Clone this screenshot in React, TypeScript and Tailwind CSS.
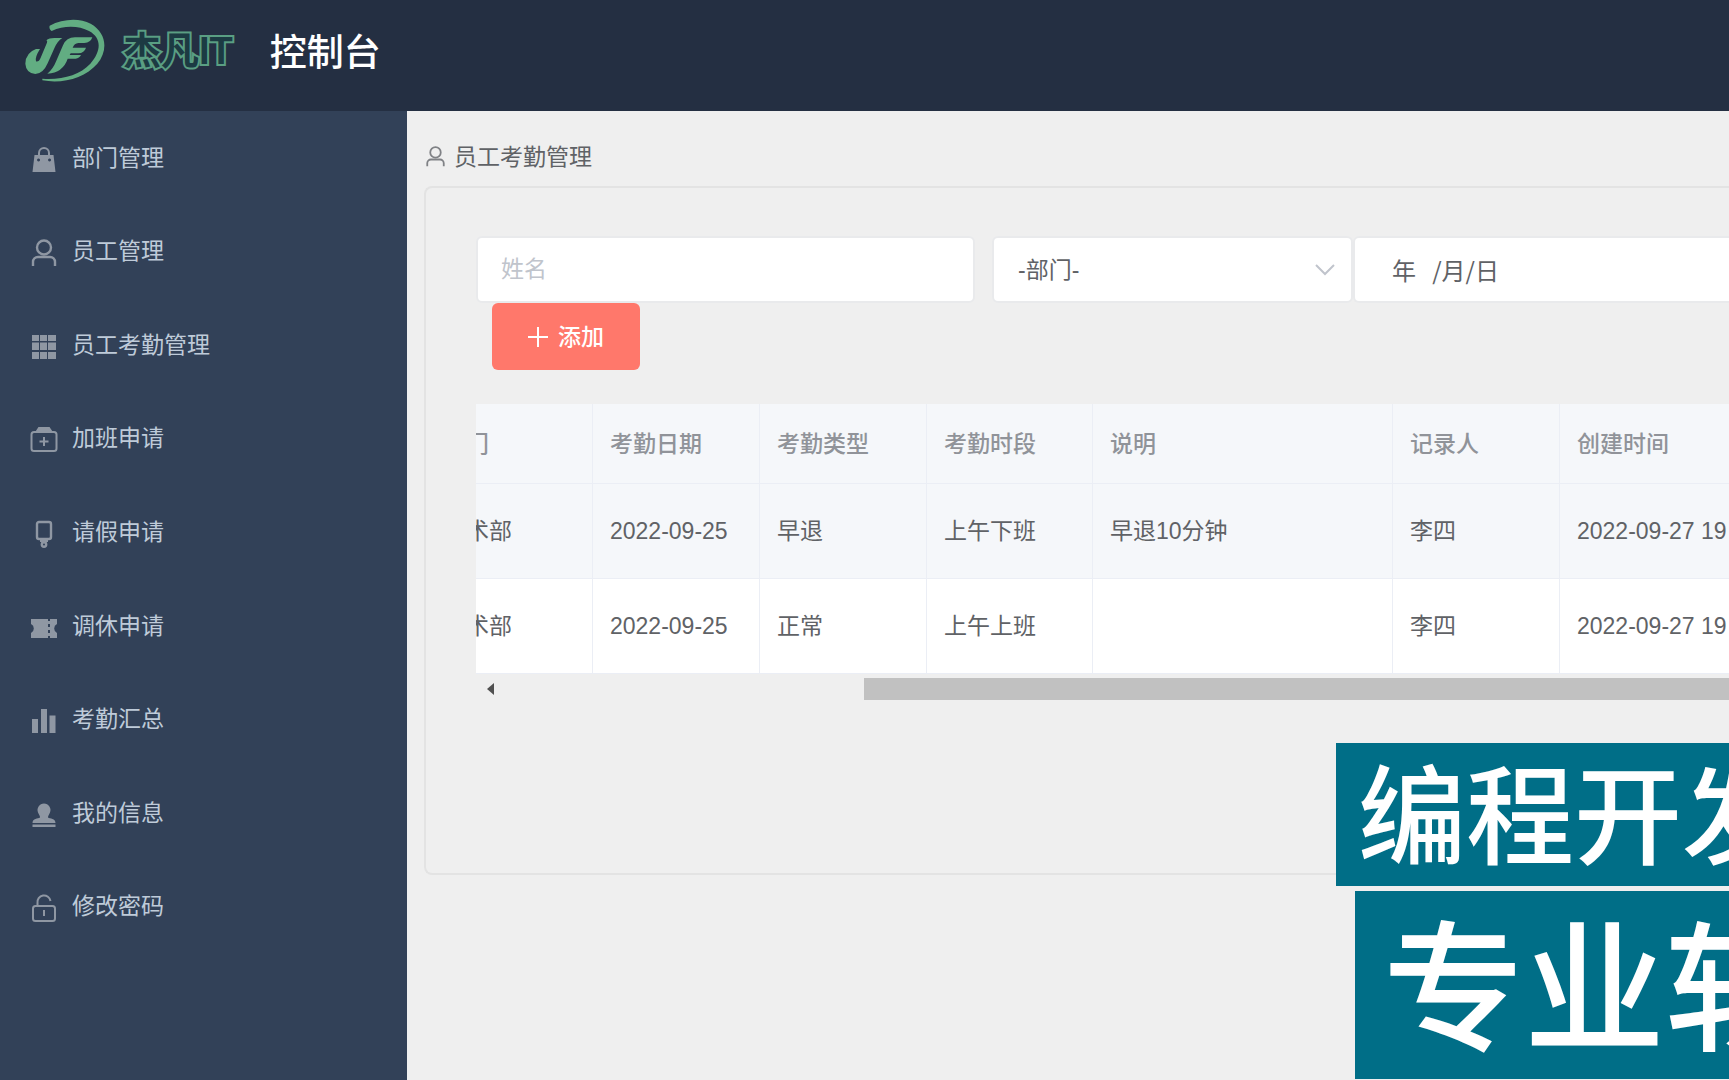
import { useLayoutEffect, useRef } from 'react'
import type { ReactNode } from 'react'
import { clsx } from 'clsx'

const UserShape = () => (
  <g fill="none" stroke="currentColor" strokeWidth="2.4">
    <circle cx="14" cy="8.5" r="7" />
    <path d="M3 27v-4a5 5 0 0 1 5-5h12a5 5 0 0 1 5 5v4" />
  </g>
)

const nav: { label: string; icon: ReactNode }[] = [
  {
    label: '部门管理',
    icon: (
      <>
        <path d="M9 10V7a5 5 0 0 1 10 0v3" fill="none" stroke="currentColor" strokeWidth="2" />
        <path
          fillRule="evenodd"
          d="M4.5 9h19l2 17h-23zM8.5 12.5a1.5 1.5 0 1 0 .1 0zM19.5 12.5a1.5 1.5 0 1 0 .1 0z"
        />
      </>
    ),
  },
  { label: '员工管理', icon: <UserShape /> },
  {
    label: '员工考勤管理',
    icon: (
      <path d="M2 2h7v6H2zM10 2h7v6h-7zM18 2h8v6h-8zM2 9.500h7V17H2zM10 9.500h7V17h-7zM18 9.500h8V17h-8zM2 19h7v7H2zM10 19h7v7h-7zM18 19h8v7h-8z" />
    ),
  },
  {
    label: '加班申请',
    icon: (
      <g fill="none" stroke="currentColor" strokeWidth="2">
        <rect x="1.5" y="6" width="25" height="19" rx="2.5" />
        <path d="M14 11v9M9.5 15.5h9" />
        <path d="M7 5l2-3h10l2 3z" fill="currentColor" />
      </g>
    ),
  },
  {
    label: '请假申请',
    icon: (
      <>
        <rect x="7" y="2" width="14" height="17" rx="2" fill="none" stroke="currentColor" strokeWidth="2.4" />
        <path d="M10 19h8v3h-8z" />
        <circle cx="14" cy="24.5" r="2.2" fill="none" stroke="currentColor" strokeWidth="2.4" />
      </>
    ),
  },
  {
    label: '调休申请',
    icon: (
      <>
        <path d="M1 5h17v19H1v-5a5 5 0 0 0 0-9zM20 5h7v5a5 5 0 0 0 0 9v5h-7z" />
        <path d="M18 7h2v3h-2zM18 13h2v3h-2zM18 19h2v3h-2z" />
      </>
    ),
  },
  { label: '考勤汇总', icon: <path d="M2 12h6v14H2zM11 2h6v24h-6zM19.5 8.500h6V26h-6z" /> },
  {
    label: '我的信息',
    icon: (
      <path d="M14 2.500a6.500 6.500 0 0 1 6 9c-1 2.500-2 3-2 5 2 1.500 7.500.5 7.500 5.500h-23c0-5 5.500-4 7.500-5.500 0-2-1-2.500-2-5a6.500 6.500 0 0 1 6-9zM2.500 23.500h23V26h-23z" />
    ),
  },
  {
    label: '修改密码',
    icon: (
      <g fill="none" stroke="currentColor" strokeWidth="2">
        <rect x="3" y="12" width="22" height="15" rx="2.500" />
        <path d="M7.500 12V9a6.500 6.500 0 0 1 13-2M14 16v6" />
      </g>
    ),
  },
]

const columns = [
  { title: '部门', width: 'w-[167px]' },
  { title: '考勤日期', width: 'w-[167px]' },
  { title: '考勤类型', width: 'w-[167px]' },
  { title: '考勤时段', width: 'w-[166px]' },
  { title: '说明', width: 'w-[300px]' },
  { title: '记录人', width: 'w-[167px]' },
  { title: '创建时间', width: 'w-[240px]' },
]

const rows = [
  ['技术部', '2022-09-25', '早退', '上午下班', '早退10分钟', '李四', '2022-09-27 19'],
  ['技术部', '2022-09-25', '正常', '上午上班', '', '李四', '2022-09-27 19'],
]

function Logo() {
  return (
    <svg viewBox="75 57 240 192" className="h-[64px] w-[80px] text-[#62ad82]" fill="currentColor" aria-hidden="true">
      <path d="M149 77C188 56 238 53 272 71c48 27 53 80 20 120-38 43-102 61-165 50v-5c60 4 112-11 144-45 34-38 34-78-4-98-30-16-74-18-112 0-6-4-8-10-6-16z" />
      <path d="M139 121q8-7 24-7h24q-15 9-24 31l-20 45q-14 32-37 32-28-3-30-31 1-33 32-44h12q-16 25-12 37 8 3 14-11l17-40q5-10 0-12z" />
      <path d="M142 221q17-14 27-39l20-46q10-24 36-24h52q-5 16-24 17h-18q-12 1-17 14h40q-5 16-23 17h-23l-3 5h34q-5 10-16 11h-24q-14 42-61 45z" />
    </svg>
  )
}

function Header() {
  return (
    <header className="flex h-[111px] shrink-0 items-start bg-[#242f42] pt-[19px] pl-[25px]">
      <Logo />
      <span className="ml-[18px] text-[38px] leading-[64px] font-bold text-[#1c3b43] [-webkit-text-stroke:4px_#5a9f83] [paint-order:stroke_fill] [stroke-linejoin:round]">
        杰凡IT
      </span>
      <h1 className="ml-[37px] text-[37px] leading-[70px] font-medium text-white">控制台</h1>
    </header>
  )
}

function Sidebar() {
  return (
    <aside className="w-[407px] shrink-0 bg-[#324158]">
      <nav className="grid h-[842px] grid-rows-9">
        {nav.map(({ label, icon }) => (
          <a key={label} href="#" className="flex items-center gap-[14px] pl-[30px] text-[#bfcbd9]">
            <svg viewBox="0 0 28 28" className="mt-1 h-7 w-7 text-[#8f97a3]" fill="currentColor" aria-hidden="true">
              {icon}
            </svg>
            {label}
          </a>
        ))}
      </nav>
    </aside>
  )
}

function Filters() {
  const field = 'h-[67px] rounded-md border-2 border-[#e9eaec] bg-white text-[#606266] outline-none'

  return (
    <form>
      <div className="flex">
        <input
          type="text"
          aria-label="姓名"
          placeholder="姓名"
          className={clsx(field, 'mr-[17px] w-[499px] shrink-0 px-[23px] placeholder:text-[#c0c4cc]')}
        />
        <div className="relative w-[361px] shrink-0">
          <select aria-label="部门" className={clsx(field, 'w-full appearance-none px-[24px]')}>
            <option>-部门-</option>
          </select>
          <svg
            viewBox="0 0 20 12"
            className="pointer-events-none absolute top-7 right-[18px] h-3 w-5 text-[#c0c4cc]"
            fill="none"
            stroke="currentColor"
            strokeWidth="2"
            aria-hidden="true"
          >
            <path d="M1 1l9 9 9-9" />
          </svg>
        </div>
        <input
          type="text"
          aria-label="日期"
          placeholder="年   /月/日"
          className={clsx(
            field,
            "min-w-0 flex-1 rounded-r-none border-r-0 pl-[37px] font-['Noto_Sans_CJK_SC',sans-serif] text-[24px] placeholder:text-[#606266]",
          )}
        />
      </div>
      <button
        type="button"
        className="ml-4 flex h-[67px] w-[148px] items-center justify-center gap-[10px] rounded-md bg-[#ff786b] font-medium text-white"
      >
        <svg viewBox="0 0 20 20" className="h-5 w-5" stroke="currentColor" strokeWidth="2" aria-hidden="true">
          <path d="M10 0v20M0 10h20" />
        </svg>
        添加
      </button>
    </form>
  )
}

function AttendanceTable() {
  const scroller = useRef<HTMLDivElement>(null)

  useLayoutEffect(() => {
    if (scroller.current) scroller.current.scrollLeft = 50
  }, [])

  return (
    <div className="mt-[34px]">
      <div ref={scroller} className="overflow-hidden">
        <table className="w-[1374px] table-fixed border-separate border-spacing-0 text-left">
          <thead>
            <tr className="h-20 bg-[#f5f7fa] text-[#909399]">
              {columns.map((c) => (
                <th key={c.title} className={clsx('border-r border-b border-[#ebeef5] px-[17px] font-medium', c.width)}>
                  {c.title}
                </th>
              ))}
            </tr>
          </thead>
          <tbody>
            {rows.map((row, i) => (
              <tr key={i} className={clsx('h-[95px] text-[#606266]', i === 0 ? 'bg-[#f5f7fa]' : 'bg-white')}>
                {row.map((cell, j) => (
                  <td key={j} className="border-r border-b border-[#ebeef5] px-[17px] whitespace-nowrap">
                    {cell}
                  </td>
                ))}
              </tr>
            ))}
          </tbody>
        </table>
      </div>
      <div className="mt-1 flex h-[22px] items-center">
        <button type="button" aria-label="向左滚动" className="flex w-7 justify-center">
          <svg viewBox="0 0 7 12" className="h-3 w-[7px] text-[#505050]" fill="currentColor" aria-hidden="true">
            <path d="M7 0v12L0 6z" />
          </svg>
        </button>
        <div className="ml-[360px] h-full flex-1 bg-[#c1c1c1]" />
      </div>
    </div>
  )
}

function Banner() {
  return (
    <div className="absolute right-0 bottom-0 flex flex-col items-end gap-[5px] pb-px font-medium whitespace-nowrap text-white">
      <p className="h-[143px] w-[393px] overflow-hidden bg-[#006e87] pt-1 pl-[22px] text-[108px] leading-[143px]">编程开发</p>
      <p className="h-[188px] w-[374px] overflow-hidden bg-[#006e87] pt-1.5 pl-[28px] text-[141px] leading-[188px]">专业软</p>
    </div>
  )
}

export default function App() {
  return (
    <div className="relative flex min-h-screen flex-col overflow-hidden font-['Liberation_Sans','Noto_Sans_CJK_SC',sans-serif] text-[23px] leading-8">
      <Header />
      <div className="flex flex-1">
        <Sidebar />
        <main className="min-w-0 flex-1 bg-[#efefef] pt-[30px] pl-[17px]">
          <h2 className="flex h-[45px] items-start gap-2 pl-px text-[#606266]">
            <svg viewBox="0 0 28 28" className="mt-[5px] h-[21px] w-[21px] text-[#808286]" aria-hidden="true">
              <UserShape />
            </svg>
            员工考勤管理
          </h2>
          <section className="rounded-l-lg border-2 border-r-0 border-[#e3e3e3] pt-12 pb-[173px] pl-[50px]">
            <Filters />
            <AttendanceTable />
          </section>
        </main>
      </div>
      <Banner />
    </div>
  )
}
